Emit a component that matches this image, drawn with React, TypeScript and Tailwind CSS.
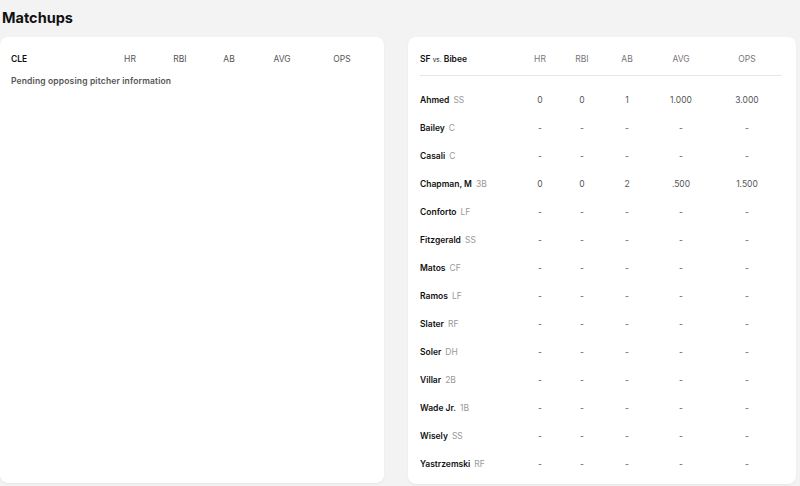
const players: { name: string; pos: string; stats: string[] }[] = [
    { name: 'Ahmed', pos: 'SS', stats: ['0', '0', '1', '1.000', '3.000'] },
    { name: 'Bailey', pos: 'C', stats: ['-', '-', '-', '-', '-'] },
    { name: 'Casali', pos: 'C', stats: ['-', '-', '-', '-', '-'] },
    { name: 'Chapman, M', pos: '3B', stats: ['0', '0', '2', '.500', '1.500'] },
    { name: 'Conforto', pos: 'LF', stats: ['-', '-', '-', '-', '-'] },
    { name: 'Fitzgerald', pos: 'SS', stats: ['-', '-', '-', '-', '-'] },
    { name: 'Matos', pos: 'CF', stats: ['-', '-', '-', '-', '-'] },
    { name: 'Ramos', pos: 'LF', stats: ['-', '-', '-', '-', '-'] },
    { name: 'Slater', pos: 'RF', stats: ['-', '-', '-', '-', '-'] },
    { name: 'Soler', pos: 'DH', stats: ['-', '-', '-', '-', '-'] },
    { name: 'Villar', pos: '2B', stats: ['-', '-', '-', '-', '-'] },
    { name: 'Wade Jr.', pos: '1B', stats: ['-', '-', '-', '-', '-'] },
    { name: 'Wisely', pos: 'SS', stats: ['-', '-', '-', '-', '-'] },
    { name: 'Yastrzemski', pos: 'RF', stats: ['-', '-', '-', '-', '-'] },
];

const headers = ['HR', 'RBI', 'AB', 'AVG', 'OPS'];

// column grids for each card
const leftCols = 'grid grid-cols-[94px_50px_50px_48px_58px_62px]';
const rightCols = 'grid grid-cols-[99px_42px_42px_48px_60px_72px]';

export default function App() {
    return (
        <div className="w-[800px] h-[486px] overflow-hidden bg-[#f3f3f3] font-['Inter',sans-serif]">
            <h1 className="pl-[2px] pt-[8px] h-[37px] text-[14.5px] leading-[20px] font-bold text-[#111]">
                Matchups
            </h1>
            <div className="flex gap-[24px] pr-[4px]">
                <div className="w-[384px] h-[446px] bg-white rounded-[8px] shadow-[0_1px_2px_rgba(0,0,0,0.06)] pl-[11px] pt-[16px]">
                    <div className={`${leftCols} items-center h-[12px] text-[8.5px]`}>
                        <span className="font-semibold text-[#111]">CLE</span>
                        {headers.map((h) => (
                            <span key={h} className="text-center text-[#555]">{h}</span>
                        ))}
                    </div>
                    <p className="mt-[10px] leading-[12px] text-[8.5px] font-semibold tracking-[0.15px] text-[#555]">
                        Pending opposing pitcher information
                    </p>
                </div>
                <div className="flex-1 h-[447px] bg-white rounded-[8px] shadow-[0_1px_2px_rgba(0,0,0,0.06)] px-[12px] pt-[16px]">
                    <div className={`${rightCols} items-center h-[12px] text-[8.5px]`}>
                        <span className="font-semibold text-[#111]">
                            SF <span className="text-[6.5px] font-normal">vs.</span> Bibee
                        </span>
                        {headers.map((h) => (
                            <span key={h} className="text-center text-[#777]">{h}</span>
                        ))}
                    </div>
                    <div className="mt-[10px] mr-[2px] border-t border-[#e6e6e6]" />
                    <div className="mt-[10px]">
                        {players.map((p) => (
                            <div key={p.name} className={`${rightCols} items-center h-[28px] text-[8.5px]`}>
                                <span className="whitespace-nowrap">
                                    <span className="font-semibold text-[#111]">{p.name}</span>
                                    <span className="ml-[4px] text-[#999]">{p.pos}</span>
                                </span>
                                {p.stats.map((s, i) => (
                                    <span key={i} className="text-center text-[#555]">{s}</span>
                                ))}
                            </div>
                        ))}
                    </div>
                </div>
            </div>
        </div>
    );
}
